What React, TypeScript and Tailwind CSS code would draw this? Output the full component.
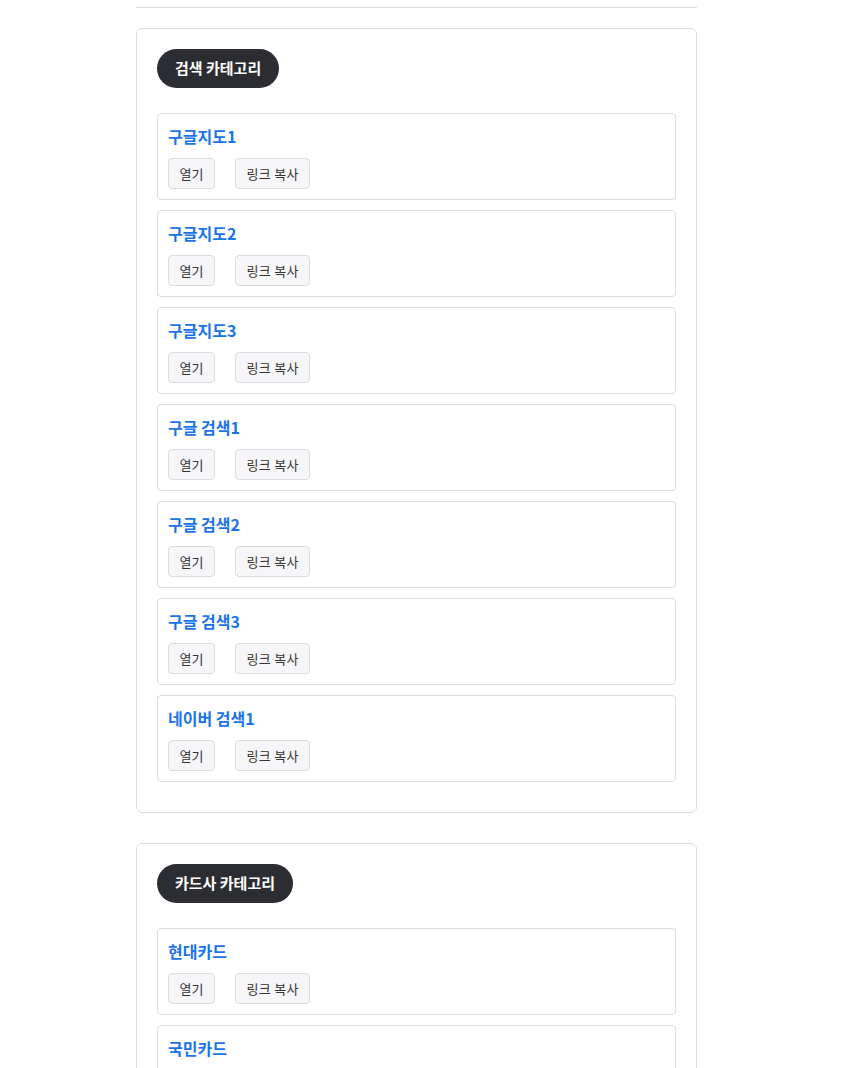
import React from "react";

const sections = [
  {
    title: "검색 카테고리",
    items: ["구글지도1", "구글지도2", "구글지도3", "구글 검색1", "구글 검색2", "구글 검색3", "네이버 검색1"],
  },
  {
    title: "카드사 카테고리",
    items: ["현대카드", "국민카드", "신한카드"],
  },
];

export default function App() {
  return (
    <div
      className="min-h-screen bg-white"
      style={{ fontFamily: '"Noto Sans CJK KR", "Noto Sans", sans-serif' }}
    >
      <div className="ml-[136px] w-[561px] pt-[7px]">
        <div className="border-t border-[#dddddd]" />
        {sections.map((s) => (
          <div
            key={s.title}
            className="mt-[20px] mb-[30px] rounded-[6px] border border-[#dddddd] px-[20px] pt-[20px] pb-[20px]"
          >
            <div className="flex">
              <span className="flex h-[39px] items-center rounded-full bg-[#2c2d32] px-[18px] text-[15px] font-bold text-white">
                {s.title}
              </span>
            </div>
            <div className="mt-[25px] flex flex-col gap-[10px] pb-[10px]">
              {s.items.map((it) => (
                <div
                  key={it}
                  className="rounded-[4px] border border-[#dddddd] px-[10px] pt-[10px] pb-[10px]"
                >
                  <div className="text-[16px] leading-[25px] font-bold text-[#1a73e8]">{it}</div>
                  <div className="mt-[9px] flex gap-[20px]">
                    <button className="h-[31px] rounded-[4px] border border-[#dcdce0] bg-[#f6f6f8] px-[10.5px] text-[13px] text-[#333333]">
                      열기
                    </button>
                    <button className="h-[31px] rounded-[4px] border border-[#dcdce0] bg-[#f6f6f8] px-[10.5px] text-[13px] tracking-[0.3px] text-[#333333]">
                      링크 복사
                    </button>
                  </div>
                </div>
              ))}
            </div>
          </div>
        ))}
      </div>
    </div>
  );
}
